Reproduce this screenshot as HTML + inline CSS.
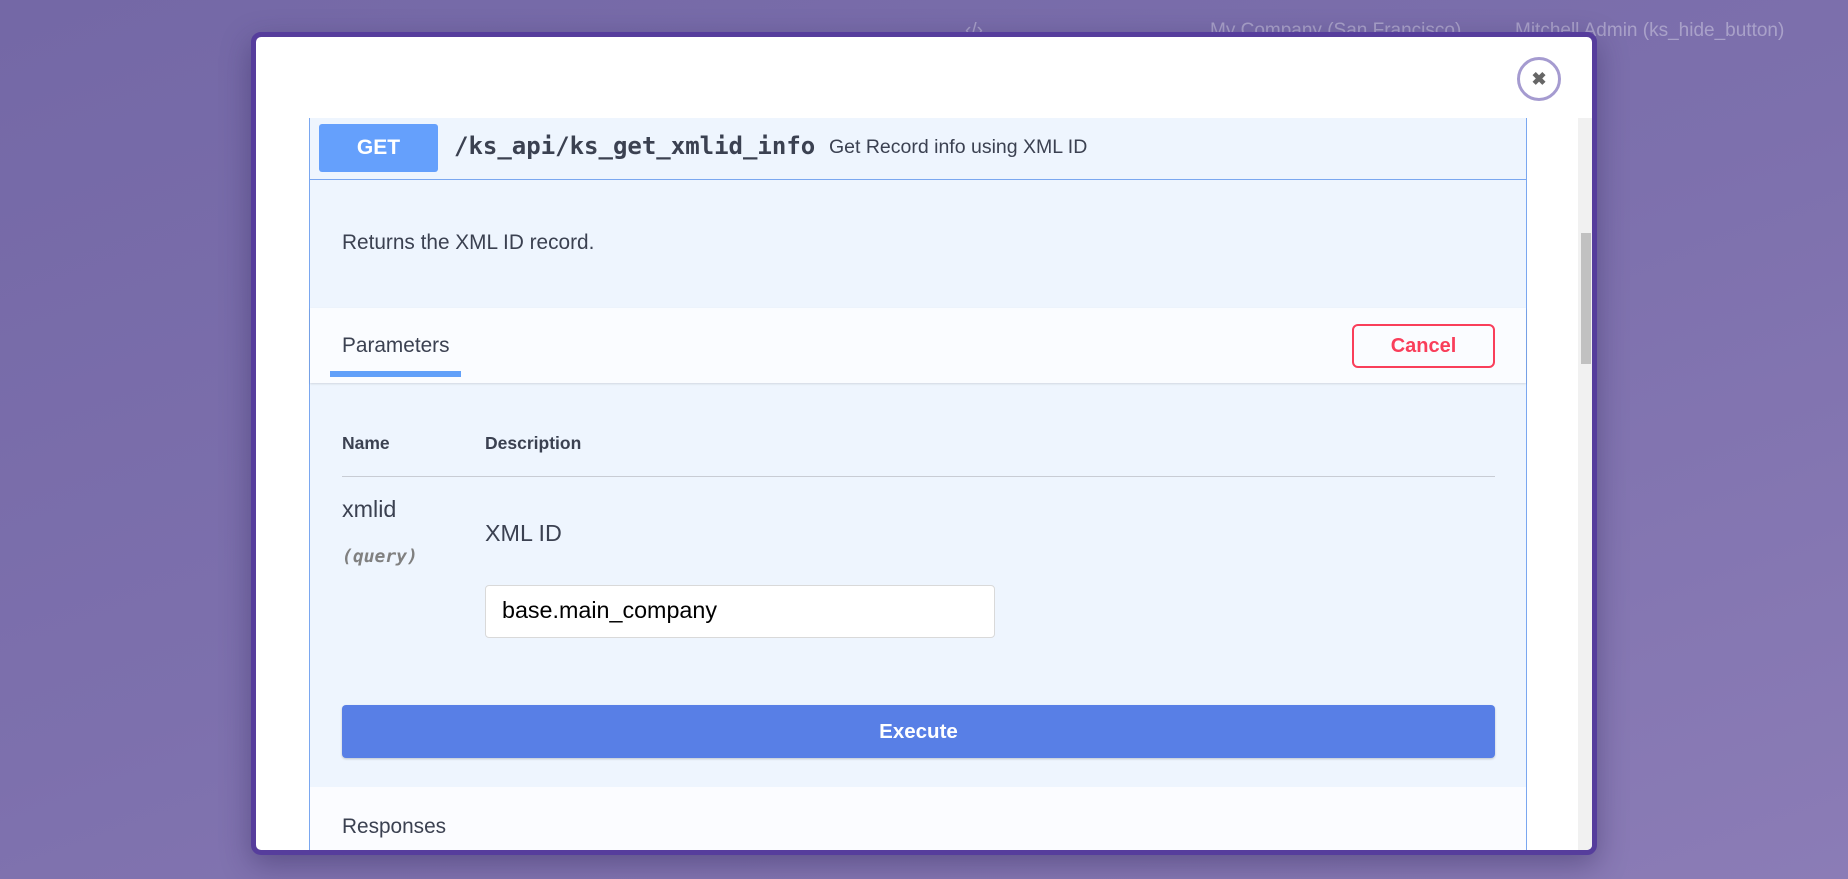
<!DOCTYPE html>
<html><head><meta charset="utf-8"><style>
*{box-sizing:border-box;margin:0;padding:0}
body{width:1848px;height:879px;overflow:hidden;position:relative;font-family:"Liberation Sans",sans-serif;background:linear-gradient(160deg,#7468a6 0%,#7d70ad 50%,#8b7cb6 100%);}
.nav{position:absolute;top:20px;color:rgba(255,255,255,.35);font-size:19px}
.modal{position:absolute;left:251px;top:32px;width:1346px;height:823px;background:#fff;border:5px solid #563d9c;border-radius:10px;box-shadow:0 10px 30px rgba(40,30,80,.4);overflow:hidden}
.close{position:absolute;left:1261px;top:20px;width:44px;height:44px;border:3px solid #a59bd0;border-radius:50%;color:#666;font-size:18px;font-weight:bold;text-align:center;line-height:38px}
.sb{position:absolute;left:1322px;top:81px;width:14px;height:737px;background:#f1f1f1}
.thumb{position:absolute;left:1325px;top:196px;width:10px;height:131px;background:#c1c1c1}
.op{position:absolute;left:53px;top:81px;width:1218px;height:760px;background:#eef5fe;border:1px solid #7aa7f0;border-top:none}
.hdr{height:62px;border-bottom:1px solid #7aa7f0;position:relative}
.get{position:absolute;left:9px;top:6px;width:119px;height:48px;background:#65a0fc;border-radius:3px;color:#fff;font-weight:bold;font-size:21px;text-align:center;line-height:48px}
.path{position:absolute;left:144px;top:14px;font-family:"DejaVu Sans Mono","Liberation Mono",monospace;font-weight:bold;font-size:24px;color:#3b4151}
.sum{position:absolute;left:519px;top:18px;font-size:19.5px;color:#3b4151}
.t{position:absolute;color:#3b4151;white-space:nowrap}
</style></head><body>
<div class="nav" style="left:965px">‹/›</div>
<div class="nav" style="left:1210px">My Company (San Francisco)</div>
<div class="nav" style="left:1515px">Mitchell Admin (ks_hide_button)</div>
<div class="modal">
<div class="close">✖</div>
<div class="sb"></div><div class="thumb"></div>
<div class="op">
 <div class="hdr"><div class="get">GET</div><div class="path">/ks_api/ks_get_xmlid_info</div><div class="sum">Get Record info using XML ID</div></div>
 <div class="t" style="left:32px;top:113px;font-size:20.8px">Returns the XML ID record.</div>
 <div style="position:absolute;left:0;top:190px;width:1216px;height:75px;background:#fafcff;box-shadow:0 1px 2px rgba(0,0,0,.12)"></div>
 <div class="t" style="left:32px;top:216px;font-size:20.8px">Parameters</div>
 <div style="position:absolute;left:20px;top:253px;width:131px;height:6px;background:#61a0f9"></div>
 <div style="position:absolute;left:1042px;top:206px;width:143px;height:44px;border:2px solid #f93e5a;border-radius:6px;color:#f93e5a;font-weight:bold;font-size:20px;text-align:center;line-height:40px">Cancel</div>
 <div class="t" style="left:32px;top:315px;font-size:17.5px;font-weight:bold">Name</div>
 <div class="t" style="left:175px;top:315px;font-size:17.5px;font-weight:bold">Description</div>
 <div style="position:absolute;left:32px;top:358px;width:1153px;height:1px;background:#c8ccd4"></div>
 <div class="t" style="left:32px;top:378px;font-size:23.3px">xmlid</div>
 <div class="t" style="left:32px;top:428px;font-size:18px;font-style:italic;font-weight:bold;color:#808080;font-family:'DejaVu Sans Mono',monospace">(query)</div>
 <div class="t" style="left:175px;top:402px;font-size:23.3px">XML ID</div>
 <div style="position:absolute;left:175px;top:467px;width:510px;height:53px;background:#fff;border:1px solid #d9d9d9;border-radius:4px;font-size:23.3px;padding:11px 16px;color:#000">base.main_company</div>
 <div style="position:absolute;left:32px;top:587px;width:1153px;height:53px;background:#587fe6;border-radius:4px;color:#fff;font-weight:bold;font-size:20.5px;text-align:center;line-height:53px;box-shadow:0 1px 2px rgba(0,0,0,.2)">Execute</div>
 <div style="position:absolute;left:0;top:669px;width:1216px;height:100px;background:#fbfcff"></div>
 <div class="t" style="left:32px;top:697px;font-size:20.8px">Responses</div>
</div>
</div>
</body></html>
